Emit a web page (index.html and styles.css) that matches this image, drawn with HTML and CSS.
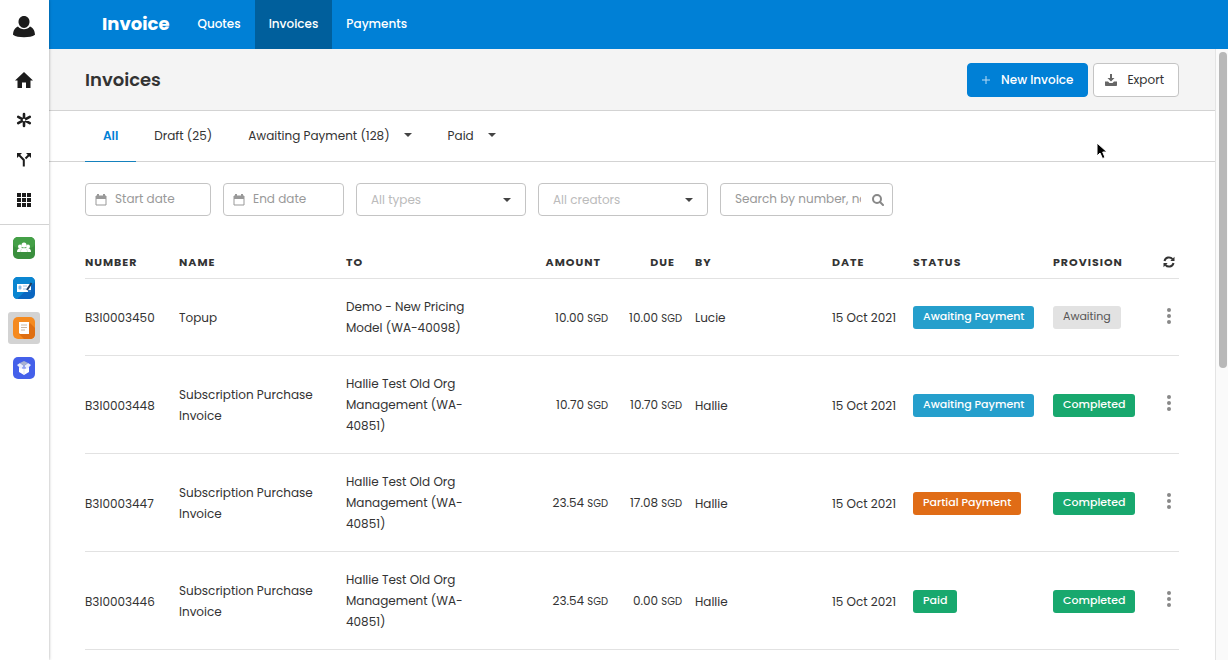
FILE: index.html
```html
<!DOCTYPE html>
<html lang="en">
<head>
    <meta charset="UTF-8">
    <meta name="viewport" content="width=device-width, initial-scale=1.0">
    <title>Invoices</title>
    <link rel="stylesheet" href="styles.css">
</head>
<body>
    <div class="app">
        <aside class="rail">
            <a class="rail-user" href="#" aria-label="Account">
                <svg width="22" height="22" viewBox="0 0 22 22" fill="#1c1c1c"><path d="M11 0c3.300 0 5.500 2.500 5.500 5.800S14.200 12 11 12 5.500 9.100 5.500 5.800 7.700 0 11 0z"/><path d="M5 10.500c1.500 1.800 3.500 2.800 6 2.800s4.500-1 6-2.800c3 1 4.800 4.200 5 8.200-2.500 1.800-6.500 2.500-11 2.500S2.500 20.500 0 18.700c.2-4 2-7.200 5-8.200z"/></svg>
            </a>
            <nav class="rail-nav">
                <a href="#" aria-label="Home">
                    <svg width="18" height="16" viewBox="0 0 18 16" fill="#1c1c1c"><path d="M9 0l9 8.500h-2.500V16H11v-5.500H7V16H2.500V8.500H0z"/></svg>
                </a>
                <a href="#" aria-label="Services">
                    <svg width="16" height="16" viewBox="0 0 16 16" stroke="#1c1c1c" stroke-width="2.600" stroke-linecap="round"><path d="M8 2v12M2.200 4.800l11.600 6.400M13.800 4.800L2.200 11.200"/><circle cx="8" cy="8" r="1.300" fill="#fff" stroke="none"/></svg>
                </a>
                <a href="#" aria-label="Workflows">
                    <svg width="16" height="14" viewBox="0 0 16 14" fill="#1c1c1c"><path d="M1 0h5L1 5zM10 0h5v5z"/><path d="M2.500 1.500L7.800 7v6.500M13.500 1.500l-4 4" fill="none" stroke="#1c1c1c" stroke-width="2"/></svg>
                </a>
                <a href="#" aria-label="Apps">
                    <svg width="16" height="16" viewBox="0 0 16 16" fill="#1c1c1c"><path d="M1 1h4v4H1zM6 1h4v4H6zM11 1h4v4h-4zM1 6h4v4H1zM6 6h4v4H6zM11 6h4v4h-4zM1 11h4v4H1zM6 11h4v4H6zM11 11h4v4h-4z"/><path d="M5.500 0v16M10.500 0v16M0 5.500h16M0 10.500h16" stroke="#fff"/></svg>
                </a>
            </nav>
            <nav class="rail-apps">
                <a href="#" aria-label="Contacts">
                    <svg width="22" height="22" viewBox="0 0 22 22"><rect width="22" height="22" rx="5" fill="#3a8f3d"/><rect width="22" height="11" rx="5" fill="#44a047"/><g fill="#fff"><circle cx="7" cy="9.500" r="2"/><circle cx="15" cy="9.500" r="2"/><circle cx="11" cy="8" r="2.500"/><path d="M4 15c0-2.500 1.500-4 3.500-4h7c2 0 3.500 1.500 3.500 4z"/></g><path d="M7.500 15c0-2.500 1.500-4 3.500-4s3.500 1.500 3.500 4" fill="none" stroke="#d5ead6"/></svg>
                </a>
                <a href="#" aria-label="Payments">
                    <svg width="22" height="22" viewBox="0 0 22 22"><rect width="22" height="22" rx="5" fill="#0b66c0"/><path d="M5 0h12c3 0 5 2 5 5L4 22c-2 0-4-2-4-5V5c0-3 2-5 5-5z" fill="#0a86d1"/><path d="M4 7h14v8H4z" fill="#fff"/><path d="M6 9h2v3H6zM10 9h4M10 12h4" fill="#68a8df" stroke="#9bc5e8"/><path d="M18.500 6L14 13" stroke="#223c5c" stroke-width="2"/><path d="M15 13h3v2h-3z" fill="#2a77c4"/></svg>
                </a>
                <a class="current" href="#" aria-label="Invoice">
                    <svg width="22" height="22" viewBox="0 0 22 22"><rect width="22" height="22" rx="5" fill="#f58a1f"/><path d="M6 17l11-11 5 5v6c0 3-2 5-5 5h-6z" fill="#df6f12"/><path d="M6 5h10v12H7l-1-1z" fill="#fff"/><path d="M8 8h6M8 10.500h6M8 13h4" stroke="#c9b6a2"/></svg>
                </a>
                <a href="#" aria-label="Products">
                    <svg width="22" height="22" viewBox="0 0 22 22"><rect width="22" height="22" rx="5" fill="#4460ea"/><path d="M6 10l5 2 5-2v5l-5 3-5-3z" fill="#fff"/><path d="M4 8l3-2 4 3-3 3zM18 8l-3-2-4 3 3 3z" fill="#e9edfc"/><path d="M7 6l4-2 4 2-4 3z" fill="#a9b2cf"/><path d="M11 10v7" stroke="#e0e4f5"/></svg>
                </a>
            </nav>
        </aside>

        <div class="main">
            <header class="topbar">
                <a class="brand" href="#">Invoice</a>
                <nav class="topnav">
                    <a href="#">Quotes</a>
                    <a class="active" href="#">Invoices</a>
                    <a href="#">Payments</a>
                </nav>
            </header>

            <div class="body">
                <div class="content">
                    <div class="page-head">
                        <h1>Invoices</h1>
                        <div class="actions">
                            <button class="btn btn-primary" type="button">
                                <svg width="8" height="8" viewBox="0 0 8 8" stroke="#b9dcf5"><path d="M4 0v8M0 4h8"/></svg>
                                New Invoice
                            </button>
                            <button class="btn btn-default" type="button">
                                <svg width="12" height="12" viewBox="0 0 12 12" fill="#666"><path d="M5 0h2v4h2.500L6 7.500 2.500 4H5z"/><path d="M0 7.500h3L4.500 9h3L9 7.500h3V11c0 .6-.4 1-1 1H1c-.6 0-1-.4-1-1z"/></svg>
                                Export
                            </button>
                        </div>
                    </div>

                    <nav class="tabs">
                        <a class="active" href="#">All</a>
                        <a href="#">Draft (25)</a>
                        <a href="#">Awaiting Payment (128) <span class="caret"></span></a>
                        <a href="#">Paid <span class="caret"></span></a>
                    </nav>

                    <form class="filters">
                        <label class="field field-start">
                            <svg width="12" height="12" viewBox="0 0 12 12"><path d="M1 2h10v9H1z" fill="none" stroke="#999"/><path d="M1 2h10v3H1zM2 0h2v2H2zM8 0h2v2H8z" fill="#999"/></svg>
                            <input type="text" placeholder="Start date" aria-label="Start date">
                        </label>
                        <label class="field field-end">
                            <svg width="12" height="12" viewBox="0 0 12 12"><path d="M1 2h10v9H1z" fill="none" stroke="#999"/><path d="M1 2h10v3H1zM2 0h2v2H2zM8 0h2v2H8z" fill="#999"/></svg>
                            <input type="text" placeholder="End date" aria-label="End date">
                        </label>
                        <label class="field field-select">
                            <select aria-label="Type"><option>All types</option></select>
                            <span class="caret"></span>
                        </label>
                        <label class="field field-select">
                            <select aria-label="Creator"><option>All creators</option></select>
                            <span class="caret"></span>
                        </label>
                        <label class="field field-search">
                            <input type="text" placeholder="Search by number, name" aria-label="Search">
                            <svg width="12" height="12" viewBox="0 0 12 12" fill="none" stroke="#888" stroke-width="2"><circle cx="5" cy="5" r="4"/><path d="M8 8l3 3" stroke-linecap="round"/></svg>
                        </label>
                    </form>

                    <table class="invoices">
                        <colgroup>
                            <col class="col-number"><col class="col-name"><col class="col-to"><col class="col-amount"><col class="col-due">
                            <col class="col-by"><col class="col-date"><col class="col-status"><col class="col-provision"><col class="col-menu">
                        </colgroup>
                        <thead>
                            <tr>
                                <th>Number</th>
                                <th>Name</th>
                                <th>To</th>
                                <th class="num">Amount</th>
                                <th class="num">Due</th>
                                <th>By</th>
                                <th>Date</th>
                                <th>Status</th>
                                <th>Provision</th>
                                <th class="menu">
                                    <button class="icon-btn" type="button" aria-label="Refresh">
                                        <svg width="12" height="12" viewBox="0 0 12 12"><path d="M1.500 5a4.500 4.500 0 0 1 8-1.800M10.500 7a4.500 4.500 0 0 1-8 1.800" fill="none" stroke="#333" stroke-width="2"/><path d="M11.500.8V5H7.300zM.5 11.200V7h4.200z" fill="#333"/></svg>
                                    </button>
                                </th>
                            </tr>
                        </thead>
                        <tbody>
                            <tr>
                                <td>B3I0003450</td>
                                <td>Topup</td>
                                <td class="to">Demo - New Pricing Model (WA-40098)</td>
                                <td class="num">10.00 <small>SGD</small></td>
                                <td class="num">10.00 <small>SGD</small></td>
                                <td>Lucie</td>
                                <td class="date">15 Oct 2021</td>
                                <td><span class="badge badge-info">Awaiting Payment</span></td>
                                <td><span class="badge badge-muted">Awaiting</span></td>
                                <td class="menu"><button class="icon-btn" type="button" aria-label="More"><svg width="4" height="18" viewBox="0 0 4 18" fill="#888"><circle cx="2" cy="3" r="2"/><circle cx="2" cy="9" r="2"/><circle cx="2" cy="15" r="2"/></svg></button></td>
                            </tr>
                            <tr>
                                <td>B3I0003448</td>
                                <td>Subscription Purchase Invoice</td>
                                <td class="to">Hallie Test Old Org Management (WA-<wbr>40851)</td>
                                <td class="num">10.70 <small>SGD</small></td>
                                <td class="num">10.70 <small>SGD</small></td>
                                <td>Hallie</td>
                                <td class="date">15 Oct 2021</td>
                                <td><span class="badge badge-info">Awaiting Payment</span></td>
                                <td><span class="badge badge-success">Completed</span></td>
                                <td class="menu"><button class="icon-btn" type="button" aria-label="More"><svg width="4" height="18" viewBox="0 0 4 18" fill="#888"><circle cx="2" cy="3" r="2"/><circle cx="2" cy="9" r="2"/><circle cx="2" cy="15" r="2"/></svg></button></td>
                            </tr>
                            <tr>
                                <td>B3I0003447</td>
                                <td>Subscription Purchase Invoice</td>
                                <td class="to">Hallie Test Old Org Management (WA-<wbr>40851)</td>
                                <td class="num">23.54 <small>SGD</small></td>
                                <td class="num">17.08 <small>SGD</small></td>
                                <td>Hallie</td>
                                <td class="date">15 Oct 2021</td>
                                <td><span class="badge badge-warning">Partial Payment</span></td>
                                <td><span class="badge badge-success">Completed</span></td>
                                <td class="menu"><button class="icon-btn" type="button" aria-label="More"><svg width="4" height="18" viewBox="0 0 4 18" fill="#888"><circle cx="2" cy="3" r="2"/><circle cx="2" cy="9" r="2"/><circle cx="2" cy="15" r="2"/></svg></button></td>
                            </tr>
                            <tr>
                                <td>B3I0003446</td>
                                <td>Subscription Purchase Invoice</td>
                                <td class="to">Hallie Test Old Org Management (WA-<wbr>40851)</td>
                                <td class="num">23.54 <small>SGD</small></td>
                                <td class="num">0.00 <small>SGD</small></td>
                                <td>Hallie</td>
                                <td class="date">15 Oct 2021</td>
                                <td><span class="badge badge-success">Paid</span></td>
                                <td><span class="badge badge-success">Completed</span></td>
                                <td class="menu"><button class="icon-btn" type="button" aria-label="More"><svg width="4" height="18" viewBox="0 0 4 18" fill="#888"><circle cx="2" cy="3" r="2"/><circle cx="2" cy="9" r="2"/><circle cx="2" cy="15" r="2"/></svg></button></td>
                            </tr>
                        </tbody>
                    </table>
                </div>
                <div class="scrollbar"><div class="scrollbar-thumb"></div></div>
            </div>
        </div>

        <svg class="pointer" width="12" height="18" viewBox="0 0 12 18"><path d="M1 1v13l3-3 2.500 5.500 2.500-1L6.700 10H11z" fill="#000" stroke="#fff"/></svg>
    </div>
</body>
</html>
```

FILE: styles.css
```css
* {
    box-sizing: border-box;
}
body {
    margin: 0;
    font-family: Poppins, Inter, "Liberation Sans", sans-serif;
    font-size: 12px;
    line-height: 21px;
    color: #333;
    background: #fff;
}
a {
    color: inherit;
    text-decoration: none;
}
svg {
    display: block;
    flex: none;
}
.app {
    display: flex;
    height: 100vh;
    overflow: hidden;
}

/* left rail */
.rail {
    flex: none;
    width: 49px;
    background: #fff;
    box-shadow: 0 0 3px rgba(0,0,0,0.35);
    z-index: 1;
}
.rail a {
    display: flex;
    align-items: center;
    justify-content: center;
    width: 32px;
    height: 32px;
    border-radius: 3px;
}
.rail-user {
    margin: 11px auto 0 8px;
}
.rail-nav {
    display: flex;
    flex-direction: column;
    gap: 8px;
    padding: 21px 0 8px 8px;
    border-bottom: 1px solid #d3d3d3;
}
.rail-apps {
    display: flex;
    flex-direction: column;
    gap: 8px;
    padding: 7px 0 0 8px;
}
.rail .current {
    background: #d3d3d3;
}

/* top bar */
.main {
    flex: 1;
    min-width: 0;
    display: flex;
    flex-direction: column;
}
.topbar {
    flex: none;
    display: flex;
    align-items: stretch;
    height: 49px;
    padding-left: 53px;
    background: #0080d6;
    color: #fff;
    line-height: 48px;
}
.brand {
    margin-right: 14px;
    font-size: 18px;
    font-weight: 700;
}
.topnav {
    display: flex;
}
.topnav a {
    padding: 0 14px;
    font-weight: 500;
}
.topnav .active {
    background: #005f9c;
}
.body {
    flex: 1;
    min-height: 0;
    display: flex;
}
.content {
    flex: 1;
    min-width: 0;
    overflow: hidden;
}
.scrollbar {
    flex: none;
    width: 13px;
    padding: 3px 1px 0 3px;
    border-left: 1px solid #e4e4e4;
    background: #fafafa;
}
.scrollbar-thumb {
    height: 52%;
    border-radius: 4px;
    background: #b8b8b8;
}

/* page header */
.page-head {
    display: flex;
    align-items: center;
    justify-content: space-between;
    height: 62px;
    padding: 0 36px;
    border-bottom: 1px solid #d3d3d3;
    background: #f4f4f4;
}
h1 {
    margin: 0;
    font-size: 18px;
    font-weight: 600;
}
.actions {
    display: flex;
    gap: 5px;
}
.btn {
    display: flex;
    align-items: center;
    height: 34px;
    border: 1px solid #c4c4c4;
    border-radius: 4px;
    font: inherit;
    white-space: nowrap;
}
.btn-primary {
    gap: 11px;
    padding: 0 14px;
    border-color: #0080d6;
    background: #0080d6;
    color: #fff;
    font-weight: 500;
}
.btn-default {
    gap: 10px;
    padding: 0 14px 0 11px;
    background: #fff;
    color: #333;
}

.caret {
    flex: none;
    border: 4px solid transparent;
    border-top-color: #444;
    border-bottom: 0;
}
.tabs {
    display: flex;
    height: 51px;
    padding: 0 36px;
    border-bottom: 1px solid #d3d3d3;
}
.tabs a {
    display: flex;
    align-items: center;
    gap: 14px;
    height: 51px;
    padding: 0 18px 2px;
    border-bottom: 1px solid transparent;
}
.tabs .active {
    border-bottom-color: #1581bd;
    color: #0080d6;
    font-weight: 600;
}

/* filters */
.filters {
    display: flex;
    gap: 12px;
    padding: 21px 36px 0;
}
.field {
    display: flex;
    align-items: center;
    gap: 8px;
    height: 33px;
    padding: 0 9px;
    border: 1px solid #c4c4c4;
    border-radius: 4px;
}
.field input,
.field select {
    flex: 1;
    min-width: 0;
    width: 100%;
    height: 31px;
    padding: 0;
    border: 0;
    outline: 0;
    background: none;
    font: inherit;
    color: #888;
    appearance: none;
}
.field input {
    padding-bottom: 2px;
}
.field input::placeholder {
    color: #999;
}
.field select {
    color: #bbb;
}
.field-start {
    width: 126px;
}
.field-end {
    width: 121px;
}
.field-select {
    width: 170px;
    padding: 0 14px;
}
.field-search {
    width: 173px;
    padding: 0 8px 0 14px;
    gap: 11px;
}

/* table */
.invoices {
    width: calc(100% - 72px);
    margin: 31px 36px 0;
    border-collapse: collapse;
    table-layout: fixed;
}
.invoices th {
    height: 31px;
    padding: 0;
    border-bottom: 1px solid #e2e2e2;
    font-size: 11px;
    font-weight: 700;
    letter-spacing: 1px;
    text-align: left;
    text-transform: uppercase;
}
.invoices td {
    padding: 18px 13px 16px 0;
    border-bottom: 1px solid #e2e2e2;
    vertical-align: middle;
}
.invoices .num {
    text-align: right;
    white-space: nowrap;
}
.invoices th.num {
    padding-right: 20px;
}
.invoices .to {
    padding: 17px 26px 17px 0;
}
.invoices .date {
    padding-right: 0;
    white-space: nowrap;
}
.invoices .menu {
    padding-right: 0;
    padding-left: 0;
}
.invoices td.menu {
    padding-top: 16px;
    padding-bottom: 18px;
}
.invoices small {
    font-size: 10px;
}
.col-number {
    width: 94px;
}
.col-name {
    width: 167px;
}
.col-amount {
    width: 124px;
}
.col-due {
    width: 74px;
}
.col-by {
    width: 137px;
}
.col-date {
    width: 81px;
}
.col-status {
    width: 140px;
}
.col-provision {
    width: 110px;
}
.col-menu {
    width: 16px;
}
.icon-btn {
    display: flex;
    justify-content: center;
    width: 12px;
    padding: 0;
    border: 0;
    background: none;
}
.badge {
    display: inline-block;
    height: 23px;
    padding: 0 10px;
    border-radius: 3px;
    font-size: 11px;
    font-weight: 500;
    white-space: nowrap;
    vertical-align: middle;
    color: #fff;
}
.badge-info {
    background: #259fcc;
}
.badge-success {
    background: #18a86e;
}
.badge-warning {
    background: #e06c16;
}
.badge-muted {
    background: #e2e2e2;
    color: #555;
    font-weight: 400;
}

.pointer {
    position: absolute;
    left: 1096px;
    top: 142px;
}
```
